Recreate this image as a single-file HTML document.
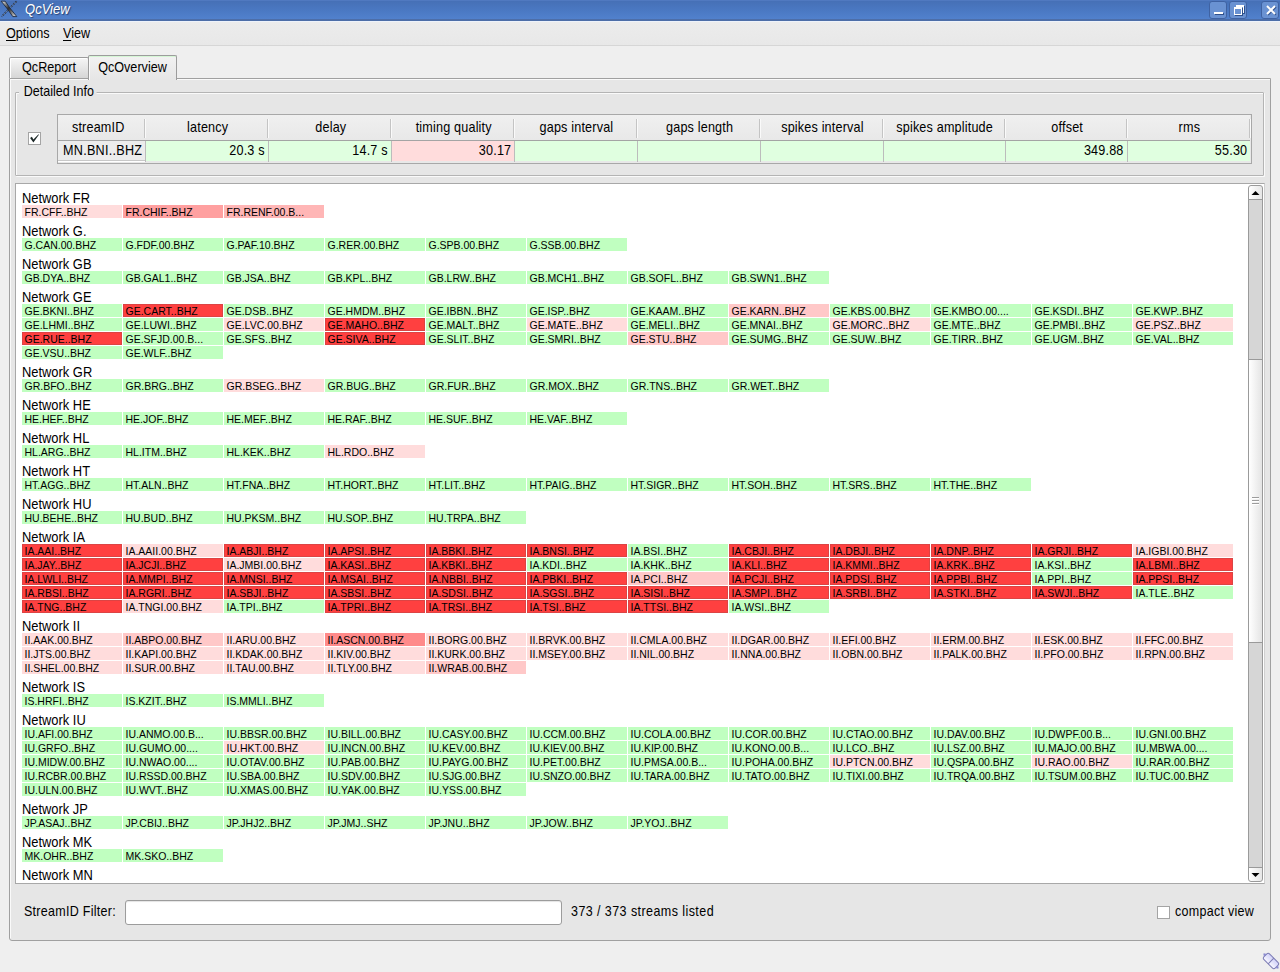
<!DOCTYPE html>
<html><head><meta charset="utf-8">
<style>
*{box-sizing:border-box;margin:0;padding:0}
html,body{width:1280px;height:972px;overflow:hidden;background:#efefef;font-family:"Liberation Sans",sans-serif;color:#000;position:relative}
.abs{position:absolute}
#title{left:0;top:0;width:1280px;height:21px;background:linear-gradient(#5079c0 0px,#5079c0 1px,#4670b6 1px,#4a78c2 10px,#5181cd 19px,#4d6ea8 19px,#4d6ea8 21px);}
#title .t{left:25px;top:1px;font-style:italic;font-size:14px;line-height:17px;color:#fff;text-shadow:1px 1px 1px #2a4070;transform:scaleX(.93);transform-origin:0 0}
.wb{top:1px;width:18px;height:18px;border-radius:3px;background:#6a92d2;border:1px solid #3f62a2}
#tline{left:0;top:21px;width:1280px;height:1px;background:#eef3fb}
#menu{left:0;top:22px;width:1280px;height:24px;background:linear-gradient(#ececec,#e8e8e8);border-bottom:1px solid #d6d6d6}
#menu span{position:absolute;top:4px;font-size:14.5px;line-height:15px;transform:scaleX(.87);transform-origin:0 0}
#menu u{text-decoration:underline;text-decoration-thickness:1px;text-underline-offset:1.5px;text-decoration-skip-ink:none}
.tab{top:57px;height:22px;border:1px solid #9c9c9c;border-bottom:none;border-radius:3px 3px 0 0;font-size:12.5px;text-align:center;line-height:18px}
#panel{left:9px;top:78px;width:1262px;height:863px;background:#e6e6e6;border:1px solid #a0a0a0;border-radius:0 0 3px 3px;box-shadow:inset 1px 1px 0 #fafafa}
#group{left:15px;top:92px;width:1249px;height:84px;border:1px solid #b4b4b4;border-radius:1px;box-shadow:1px 1px 0 #fafafa,inset 1px 1px 0 #fafafa}
#glabel{left:19px;top:84px;font-size:14.5px;line-height:15px;background:#e6e6e6;padding:0 3px 0 5.5px;transform:scaleX(.862);transform-origin:0 0}
#chk{left:28px;top:132px;width:13px;height:13px;background:#fff;border:1px solid #a4a4a4}
#tbl{left:57px;top:114px;width:1195px;height:50px;border:1px solid #a8a8a8;background:#e8e8e8}
.th{top:115px;height:25px;font-size:12.5px;text-align:center;line-height:25px;letter-spacing:0.2px;padding-left:2px;background:linear-gradient(#f0f0f0,#e8e8e8)}
.thsep{z-index:2;top:119px;width:2px;height:19px;border-left:1px solid #c4c4c4;border-right:1px solid #fafafa}
#thline{left:58px;top:140px;width:1192px;height:1px;background:#a4a4a4}
.td{top:141px;height:20px;font-size:12.5px;text-align:right;line-height:18px;padding-right:3px;letter-spacing:0.2px}
.tdsep{z-index:2;top:141px;width:1px;height:21px;background:#bcbcbc}
.td0{top:141px;height:21px;font-size:12.5px;line-height:18px;padding-left:5px;letter-spacing:0.3px;background:#ececec;border-bottom:1px solid #fff;box-shadow:inset 0 -1px 0 #c8c8c8}
#scroll{left:15px;top:183px;width:1250px;height:701px;background:#fff;border:1px solid #a8a8a8;border-right-color:#d0d0d0;overflow:hidden}
#content{position:absolute;left:6px;top:6px;width:1220px}
.nl{font-size:14.5px;height:15px;line-height:15px}.nl span{display:inline-block;transform:scaleX(.889);transform-origin:0 0;position:relative;top:1px;left:0px}
.cells{display:flex;flex-wrap:wrap;width:1212px;gap:1px}
.c{width:100px;height:13px;font-size:10.5px;line-height:15px;padding-left:2.5px;white-space:nowrap;overflow:hidden}
.net{margin-bottom:5px}
.g{background:#c0ffc0}.p{background:#ffdcdc}.q{background:#ffc8c8}.m{background:#ffa0a0}.r{background:#ff4040;box-shadow:inset 0 0 0 1px #dc4444}.a{background:#ff8a8a}.n{background:#ffb6b6}
#sbtrack{left:1248px;top:193px;width:15px;height:681px;background:#d6d6d6;border-left:1px solid #9a9a9a;border-right:1px solid #9a9a9a}
.sbbtn{left:1248px;width:15px;height:15px;border:1px solid #9a9a9a;background:linear-gradient(90deg,#ffffff,#e6e6e6)}
#sbup{top:185px;border-radius:3px 3px 0 0}
#sbdn{top:867px;border-radius:0 0 3px 3px}
#slider{left:1248px;top:359px;width:15px;height:284px;border:1px solid #9a9a9a;background:linear-gradient(90deg,#ffffff,#e4e4e4)}
.grip{left:1252px;width:7px;height:1px;background:#9c9c9c;box-shadow:0 1px 0 #fff}
#filterlbl{left:24px;top:904px;font-size:14.5px;line-height:15px;letter-spacing:0.32px;transform:scaleX(.862);transform-origin:0 0}
#filter{left:125px;top:900px;width:437px;height:25px;background:#fff;border:1px solid #9c9c9c;border-radius:3px;box-shadow:inset 0 1px 1px #e4e4e4}
#count{left:571px;top:904px;font-size:14.5px;line-height:15px;letter-spacing:0.5px;transform:scaleX(.862);transform-origin:0 0}
#cchk{left:1157px;top:906px;width:13px;height:13px;background:#fff;border:1px solid #a4a4a4}
#clbl{left:1175px;top:904px;font-size:14.5px;line-height:15px;letter-spacing:0.32px;transform:scaleX(.862);transform-origin:0 0}
.sx{display:inline-block;font-size:14.5px;transform:scaleX(.87);white-space:nowrap}.td .sx{transform-origin:100% 50%}.td0 .sx{transform-origin:0 50%}
</style></head><body>
<div id="title" class="abs">
  <svg class="abs" style="left:0px;top:0px" width="20" height="20" viewBox="0 0 20 20"><defs><linearGradient id="xg" x1="0" y1="0" x2="1" y2="1"><stop offset="0" stop-color="#f0f0f0"/><stop offset="0.45" stop-color="#303030"/><stop offset="0.55" stop-color="#404040"/><stop offset="1" stop-color="#e8e8e8"/></linearGradient></defs><path d="M16.6 1.2 L1.6 16.6" stroke="#1e2a40" stroke-width="1.6" stroke-dasharray="2 1"/><path d="M16.4 1.4 L1.8 16.4" stroke="#7a8aa0" stroke-width="0.6"/><path d="M1.2 1.2 L5.2 1.2 L10.2 8.4 L16.8 16.6 L12.8 16.6 L7.8 9.4 Z" fill="url(#xg)" stroke="#1e2a40" stroke-width="0.9" stroke-linejoin="round"/></svg>
  <div class="abs t">QcView</div>
  <div class="abs wb" style="left:1209px"><div class="abs" style="left:4px;top:10px;width:9px;height:2px;background:#fff;box-shadow:1px 1px 0 #30508a"></div></div>
  <div class="abs wb" style="left:1229px"><div class="abs" style="left:6px;top:3px;width:8px;height:8px;border:1px solid #fff;border-top-width:2px;box-shadow:1px 1px 0 #30508a"></div><div class="abs" style="left:4px;top:5px;width:8px;height:8px;border:1px solid #fff;border-width:2px 1px 1px 1px;background:#6a92d2;box-shadow:1px 1px 0 #30508a"></div></div>
  <div class="abs wb" style="left:1261px"><svg class="abs" style="left:3px;top:2px" width="12" height="12" viewBox="0 0 12 12"><path d="M2 2 L10 10 M10 2 L2 10" stroke="#30508a" stroke-width="2" transform="translate(.8 .8)"/><path d="M2 2 L10 10 M10 2 L2 10" stroke="#fff" stroke-width="2"/></svg></div>
</div>
<div id="tline" class="abs"></div>
<div id="menu" class="abs"><span style="left:6px"><u>O</u>ptions</span><span style="left:63px"><u>V</u>iew</span></div>
<div id="panel" class="abs"></div>
<div class="abs tab" style="left:9px;width:80px;height:21px;border-radius:2px 2px 0 0;background:linear-gradient(#f6f6f6,#d6d6d6);box-shadow:inset 1px 1px 0 #fff"><span class="sx">QcReport</span></div>
<div class="abs tab" style="left:88px;width:89px;top:55px;border-radius:2px 2px 0 0;background:linear-gradient(#f2f2f2,#e6e6e6);line-height:22px;height:25px;box-shadow:inset 0 1px 0 #d4f6d4,inset 1px 0 0 #fafafa"><span class="sx">QcOverview</span></div>
<div id="group" class="abs"></div>
<div id="glabel" class="abs">Detailed Info</div>
<div id="chk" class="abs"><svg width="11" height="11" viewBox="0 0 11 11" style="position:absolute;left:0;top:0"><path d="M1.1 4.9 L2.9 3.7 L4.4 6.4 L9.5 1.2 L9.9 1.7 L4.4 9.4 Z" fill="#1c2828"/></svg></div>
<div id="tbl" class="abs"></div>
<div class="abs th" style="left:58px;width:87px;padding-left:0;padding-right:7px;"><span class="sx">streamID</span></div><div class="abs thsep" style="left:144px"></div><div class="abs td0" style="left:58px;width:88px"><span class="sx">MN.BNI..BHZ</span></div><div class="abs th" style="left:145px;width:123px;"><span class="sx">latency</span></div><div class="abs thsep" style="left:267px"></div><div class="abs td" style="left:146px;width:122px;background:#e0ffe0"><span class="sx">20.3 s</span></div><div class="abs tdsep" style="left:145px"></div><div class="abs th" style="left:268px;width:123px;"><span class="sx">delay</span></div><div class="abs thsep" style="left:390px"></div><div class="abs td" style="left:269px;width:122px;background:#e0ffe0"><span class="sx">14.7 s</span></div><div class="abs tdsep" style="left:268px"></div><div class="abs th" style="left:391px;width:123px;"><span class="sx">timing quality</span></div><div class="abs thsep" style="left:513px"></div><div class="abs td" style="left:392px;width:122px;background:#ffdcdc"><span class="sx">30.17</span></div><div class="abs tdsep" style="left:391px"></div><div class="abs th" style="left:514px;width:123px;"><span class="sx">gaps interval</span></div><div class="abs thsep" style="left:636px"></div><div class="abs td" style="left:515px;width:122px;background:#e0ffe0"><span class="sx"></span></div><div class="abs tdsep" style="left:514px"></div><div class="abs th" style="left:637px;width:123px;"><span class="sx">gaps length</span></div><div class="abs thsep" style="left:759px"></div><div class="abs td" style="left:638px;width:122px;background:#e0ffe0"><span class="sx"></span></div><div class="abs tdsep" style="left:637px"></div><div class="abs th" style="left:760px;width:123px;"><span class="sx">spikes interval</span></div><div class="abs thsep" style="left:882px"></div><div class="abs td" style="left:761px;width:122px;background:#e0ffe0"><span class="sx"></span></div><div class="abs tdsep" style="left:760px"></div><div class="abs th" style="left:883px;width:122px;"><span class="sx">spikes amplitude</span></div><div class="abs thsep" style="left:1004px"></div><div class="abs td" style="left:884px;width:121px;background:#e0ffe0"><span class="sx"></span></div><div class="abs tdsep" style="left:883px"></div><div class="abs th" style="left:1005px;width:122px;"><span class="sx">offset</span></div><div class="abs thsep" style="left:1126px"></div><div class="abs td" style="left:1006px;width:121px;background:#e0ffe0"><span class="sx">349.88</span></div><div class="abs tdsep" style="left:1005px"></div><div class="abs th" style="left:1127px;width:123px;"><span class="sx">rms</span></div><div class="abs thsep" style="left:1249px"></div><div class="abs td" style="left:1128px;width:122px;background:#e0ffe0"><span class="sx">55.30</span></div><div class="abs tdsep" style="left:1127px"></div>
<div id="thline" class="abs"></div>
<div id="scroll" class="abs"><div id="content"><div class="net"><div class="nl"><span>Network FR</span></div><div class="cells"><div class="c p">FR.CFF..BHZ</div><div class="c m">FR.CHIF..BHZ</div><div class="c n">FR.RENF.00.B...</div></div></div><div class="net"><div class="nl"><span>Network G.</span></div><div class="cells"><div class="c g">G.CAN.00.BHZ</div><div class="c g">G.FDF.00.BHZ</div><div class="c g">G.PAF.10.BHZ</div><div class="c g">G.RER.00.BHZ</div><div class="c g">G.SPB.00.BHZ</div><div class="c g">G.SSB.00.BHZ</div></div></div><div class="net"><div class="nl"><span>Network GB</span></div><div class="cells"><div class="c g">GB.DYA..BHZ</div><div class="c g">GB.GAL1..BHZ</div><div class="c g">GB.JSA..BHZ</div><div class="c g">GB.KPL..BHZ</div><div class="c g">GB.LRW..BHZ</div><div class="c g">GB.MCH1..BHZ</div><div class="c g">GB.SOFL..BHZ</div><div class="c g">GB.SWN1..BHZ</div></div></div><div class="net"><div class="nl"><span>Network GE</span></div><div class="cells"><div class="c g">GE.BKNI..BHZ</div><div class="c r">GE.CART..BHZ</div><div class="c g">GE.DSB..BHZ</div><div class="c g">GE.HMDM..BHZ</div><div class="c g">GE.IBBN..BHZ</div><div class="c g">GE.ISP..BHZ</div><div class="c g">GE.KAAM..BHZ</div><div class="c q">GE.KARN..BHZ</div><div class="c g">GE.KBS.00.BHZ</div><div class="c g">GE.KMBO.00....</div><div class="c g">GE.KSDI..BHZ</div><div class="c g">GE.KWP..BHZ</div><div class="c g">GE.LHMI..BHZ</div><div class="c g">GE.LUWI..BHZ</div><div class="c p">GE.LVC.00.BHZ</div><div class="c r">GE.MAHO..BHZ</div><div class="c g">GE.MALT..BHZ</div><div class="c p">GE.MATE..BHZ</div><div class="c g">GE.MELI..BHZ</div><div class="c g">GE.MNAI..BHZ</div><div class="c p">GE.MORC..BHZ</div><div class="c g">GE.MTE..BHZ</div><div class="c g">GE.PMBI..BHZ</div><div class="c p">GE.PSZ..BHZ</div><div class="c r">GE.RUE..BHZ</div><div class="c g">GE.SFJD.00.B...</div><div class="c g">GE.SFS..BHZ</div><div class="c r">GE.SIVA..BHZ</div><div class="c g">GE.SLIT..BHZ</div><div class="c g">GE.SMRI..BHZ</div><div class="c q">GE.STU..BHZ</div><div class="c g">GE.SUMG..BHZ</div><div class="c g">GE.SUW..BHZ</div><div class="c g">GE.TIRR..BHZ</div><div class="c g">GE.UGM..BHZ</div><div class="c g">GE.VAL..BHZ</div><div class="c g">GE.VSU..BHZ</div><div class="c g">GE.WLF..BHZ</div></div></div><div class="net"><div class="nl"><span>Network GR</span></div><div class="cells"><div class="c g">GR.BFO..BHZ</div><div class="c g">GR.BRG..BHZ</div><div class="c p">GR.BSEG..BHZ</div><div class="c g">GR.BUG..BHZ</div><div class="c g">GR.FUR..BHZ</div><div class="c g">GR.MOX..BHZ</div><div class="c g">GR.TNS..BHZ</div><div class="c g">GR.WET..BHZ</div></div></div><div class="net"><div class="nl"><span>Network HE</span></div><div class="cells"><div class="c g">HE.HEF..BHZ</div><div class="c g">HE.JOF..BHZ</div><div class="c g">HE.MEF..BHZ</div><div class="c g">HE.RAF..BHZ</div><div class="c g">HE.SUF..BHZ</div><div class="c g">HE.VAF..BHZ</div></div></div><div class="net"><div class="nl"><span>Network HL</span></div><div class="cells"><div class="c g">HL.ARG..BHZ</div><div class="c g">HL.ITM..BHZ</div><div class="c g">HL.KEK..BHZ</div><div class="c p">HL.RDO..BHZ</div></div></div><div class="net"><div class="nl"><span>Network HT</span></div><div class="cells"><div class="c g">HT.AGG..BHZ</div><div class="c g">HT.ALN..BHZ</div><div class="c g">HT.FNA..BHZ</div><div class="c g">HT.HORT..BHZ</div><div class="c g">HT.LIT..BHZ</div><div class="c g">HT.PAIG..BHZ</div><div class="c g">HT.SIGR..BHZ</div><div class="c g">HT.SOH..BHZ</div><div class="c g">HT.SRS..BHZ</div><div class="c g">HT.THE..BHZ</div></div></div><div class="net"><div class="nl"><span>Network HU</span></div><div class="cells"><div class="c g">HU.BEHE..BHZ</div><div class="c g">HU.BUD..BHZ</div><div class="c g">HU.PKSM..BHZ</div><div class="c g">HU.SOP..BHZ</div><div class="c g">HU.TRPA..BHZ</div></div></div><div class="net"><div class="nl"><span>Network IA</span></div><div class="cells"><div class="c r">IA.AAI..BHZ</div><div class="c p">IA.AAII.00.BHZ</div><div class="c r">IA.ABJI..BHZ</div><div class="c r">IA.APSI..BHZ</div><div class="c r">IA.BBKI..BHZ</div><div class="c r">IA.BNSI..BHZ</div><div class="c g">IA.BSI..BHZ</div><div class="c r">IA.CBJI..BHZ</div><div class="c r">IA.DBJI..BHZ</div><div class="c r">IA.DNP..BHZ</div><div class="c r">IA.GRJI..BHZ</div><div class="c p">IA.IGBI.00.BHZ</div><div class="c r">IA.JAY..BHZ</div><div class="c r">IA.JCJI..BHZ</div><div class="c p">IA.JMBI.00.BHZ</div><div class="c r">IA.KASI..BHZ</div><div class="c r">IA.KBKI..BHZ</div><div class="c g">IA.KDI..BHZ</div><div class="c g">IA.KHK..BHZ</div><div class="c r">IA.KLI..BHZ</div><div class="c r">IA.KMMI..BHZ</div><div class="c r">IA.KRK..BHZ</div><div class="c g">IA.KSI..BHZ</div><div class="c r">IA.LBMI..BHZ</div><div class="c r">IA.LWLI..BHZ</div><div class="c r">IA.MMPI..BHZ</div><div class="c r">IA.MNSI..BHZ</div><div class="c r">IA.MSAI..BHZ</div><div class="c r">IA.NBBI..BHZ</div><div class="c r">IA.PBKI..BHZ</div><div class="c q">IA.PCI..BHZ</div><div class="c r">IA.PCJI..BHZ</div><div class="c r">IA.PDSI..BHZ</div><div class="c r">IA.PPBI..BHZ</div><div class="c g">IA.PPI..BHZ</div><div class="c r">IA.PPSI..BHZ</div><div class="c r">IA.RBSI..BHZ</div><div class="c r">IA.RGRI..BHZ</div><div class="c r">IA.SBJI..BHZ</div><div class="c r">IA.SBSI..BHZ</div><div class="c r">IA.SDSI..BHZ</div><div class="c r">IA.SGSI..BHZ</div><div class="c r">IA.SISI..BHZ</div><div class="c r">IA.SMPI..BHZ</div><div class="c r">IA.SRBI..BHZ</div><div class="c r">IA.STKI..BHZ</div><div class="c r">IA.SWJI..BHZ</div><div class="c g">IA.TLE..BHZ</div><div class="c r">IA.TNG..BHZ</div><div class="c p">IA.TNGI.00.BHZ</div><div class="c g">IA.TPI..BHZ</div><div class="c r">IA.TPRI..BHZ</div><div class="c r">IA.TRSI..BHZ</div><div class="c r">IA.TSI..BHZ</div><div class="c r">IA.TTSI..BHZ</div><div class="c g">IA.WSI..BHZ</div></div></div><div class="net"><div class="nl"><span>Network II</span></div><div class="cells"><div class="c p">II.AAK.00.BHZ</div><div class="c q">II.ABPO.00.BHZ</div><div class="c p">II.ARU.00.BHZ</div><div class="c a">II.ASCN.00.BHZ</div><div class="c p">II.BORG.00.BHZ</div><div class="c p">II.BRVK.00.BHZ</div><div class="c p">II.CMLA.00.BHZ</div><div class="c p">II.DGAR.00.BHZ</div><div class="c p">II.EFI.00.BHZ</div><div class="c p">II.ERM.00.BHZ</div><div class="c p">II.ESK.00.BHZ</div><div class="c p">II.FFC.00.BHZ</div><div class="c p">II.JTS.00.BHZ</div><div class="c p">II.KAPI.00.BHZ</div><div class="c p">II.KDAK.00.BHZ</div><div class="c p">II.KIV.00.BHZ</div><div class="c p">II.KURK.00.BHZ</div><div class="c p">II.MSEY.00.BHZ</div><div class="c p">II.NIL.00.BHZ</div><div class="c p">II.NNA.00.BHZ</div><div class="c p">II.OBN.00.BHZ</div><div class="c p">II.PALK.00.BHZ</div><div class="c p">II.PFO.00.BHZ</div><div class="c p">II.RPN.00.BHZ</div><div class="c p">II.SHEL.00.BHZ</div><div class="c p">II.SUR.00.BHZ</div><div class="c p">II.TAU.00.BHZ</div><div class="c p">II.TLY.00.BHZ</div><div class="c q">II.WRAB.00.BHZ</div></div></div><div class="net"><div class="nl"><span>Network IS</span></div><div class="cells"><div class="c g">IS.HRFI..BHZ</div><div class="c g">IS.KZIT..BHZ</div><div class="c g">IS.MMLI..BHZ</div></div></div><div class="net"><div class="nl"><span>Network IU</span></div><div class="cells"><div class="c g">IU.AFI.00.BHZ</div><div class="c g">IU.ANMO.00.B...</div><div class="c g">IU.BBSR.00.BHZ</div><div class="c g">IU.BILL.00.BHZ</div><div class="c g">IU.CASY.00.BHZ</div><div class="c g">IU.CCM.00.BHZ</div><div class="c g">IU.COLA.00.BHZ</div><div class="c g">IU.COR.00.BHZ</div><div class="c g">IU.CTAO.00.BHZ</div><div class="c g">IU.DAV.00.BHZ</div><div class="c g">IU.DWPF.00.B...</div><div class="c g">IU.GNI.00.BHZ</div><div class="c g">IU.GRFO..BHZ</div><div class="c g">IU.GUMO.00....</div><div class="c p">IU.HKT.00.BHZ</div><div class="c g">IU.INCN.00.BHZ</div><div class="c g">IU.KEV.00.BHZ</div><div class="c g">IU.KIEV.00.BHZ</div><div class="c g">IU.KIP.00.BHZ</div><div class="c g">IU.KONO.00.B...</div><div class="c g">IU.LCO..BHZ</div><div class="c g">IU.LSZ.00.BHZ</div><div class="c g">IU.MAJO.00.BHZ</div><div class="c g">IU.MBWA.00....</div><div class="c g">IU.MIDW.00.BHZ</div><div class="c g">IU.NWAO.00....</div><div class="c g">IU.OTAV.00.BHZ</div><div class="c g">IU.PAB.00.BHZ</div><div class="c g">IU.PAYG.00.BHZ</div><div class="c g">IU.PET.00.BHZ</div><div class="c g">IU.PMSA.00.B...</div><div class="c g">IU.POHA.00.BHZ</div><div class="c p">IU.PTCN.00.BHZ</div><div class="c g">IU.QSPA.00.BHZ</div><div class="c p">IU.RAO.00.BHZ</div><div class="c g">IU.RAR.00.BHZ</div><div class="c g">IU.RCBR.00.BHZ</div><div class="c g">IU.RSSD.00.BHZ</div><div class="c g">IU.SBA.00.BHZ</div><div class="c g">IU.SDV.00.BHZ</div><div class="c g">IU.SJG.00.BHZ</div><div class="c g">IU.SNZO.00.BHZ</div><div class="c g">IU.TARA.00.BHZ</div><div class="c g">IU.TATO.00.BHZ</div><div class="c g">IU.TIXI.00.BHZ</div><div class="c g">IU.TRQA.00.BHZ</div><div class="c g">IU.TSUM.00.BHZ</div><div class="c g">IU.TUC.00.BHZ</div><div class="c g">IU.ULN.00.BHZ</div><div class="c g">IU.WVT..BHZ</div><div class="c g">IU.XMAS.00.BHZ</div><div class="c g">IU.YAK.00.BHZ</div><div class="c g">IU.YSS.00.BHZ</div></div></div><div class="net"><div class="nl"><span>Network JP</span></div><div class="cells"><div class="c g">JP.ASAJ..BHZ</div><div class="c g">JP.CBIJ..BHZ</div><div class="c g">JP.JHJ2..BHZ</div><div class="c g">JP.JMJ..SHZ</div><div class="c g">JP.JNU..BHZ</div><div class="c g">JP.JOW..BHZ</div><div class="c g">JP.YOJ..BHZ</div></div></div><div class="net"><div class="nl"><span>Network MK</span></div><div class="cells"><div class="c g">MK.OHR..BHZ</div><div class="c g">MK.SKO..BHZ</div></div></div><div class="net"><div class="nl"><span>Network MN</span></div><div class="cells"></div></div></div></div>
<div id="sbtrack" class="abs"></div>
<div id="sbup" class="abs sbbtn"><svg class="abs" style="left:2px;top:4px" width="9" height="6" viewBox="0 0 9 6"><path d="M0.5 5 L4.5 1 L8.5 5 Z" fill="#000"/></svg></div>
<div id="sbdn" class="abs sbbtn"><svg class="abs" style="left:2px;top:4px" width="9" height="6" viewBox="0 0 9 6"><path d="M0.5 1 L4.5 5 L8.5 1 Z" fill="#000"/></svg></div>
<div id="slider" class="abs"></div>
<div class="abs grip" style="top:497px"></div><div class="abs grip" style="top:500px"></div><div class="abs grip" style="top:503px"></div>
<div id="filterlbl" class="abs">StreamID Filter:</div>
<div id="filter" class="abs"></div>
<div id="count" class="abs">373 / 373 streams listed</div>
<div id="cchk" class="abs"></div>
<div id="clbl" class="abs">compact view</div>
<svg class="abs" style="left:1260px;top:950px" width="20" height="22" viewBox="0 0 20 22"><defs><linearGradient id="gg" x1="0" y1="0" x2="1" y2="0"><stop offset="0" stop-color="#f8f8ff"/><stop offset="1" stop-color="#d0d0f8"/></linearGradient></defs><g transform="rotate(-45 11 11)"><rect x="7" y="3" width="8" height="16" rx="2.2" fill="url(#gg)" stroke="#7c7cb4" stroke-width="1"/><path d="M7 11 L15 11" stroke="#7c7cb4" stroke-width="1"/><path d="M9.5 3 L11 0.8 L12.5 3 M9.5 19 L11 21.2 L12.5 19" fill="#8c8cd0" stroke="#8c8cd0" stroke-width="0.8"/></g></svg>
</body></html>
